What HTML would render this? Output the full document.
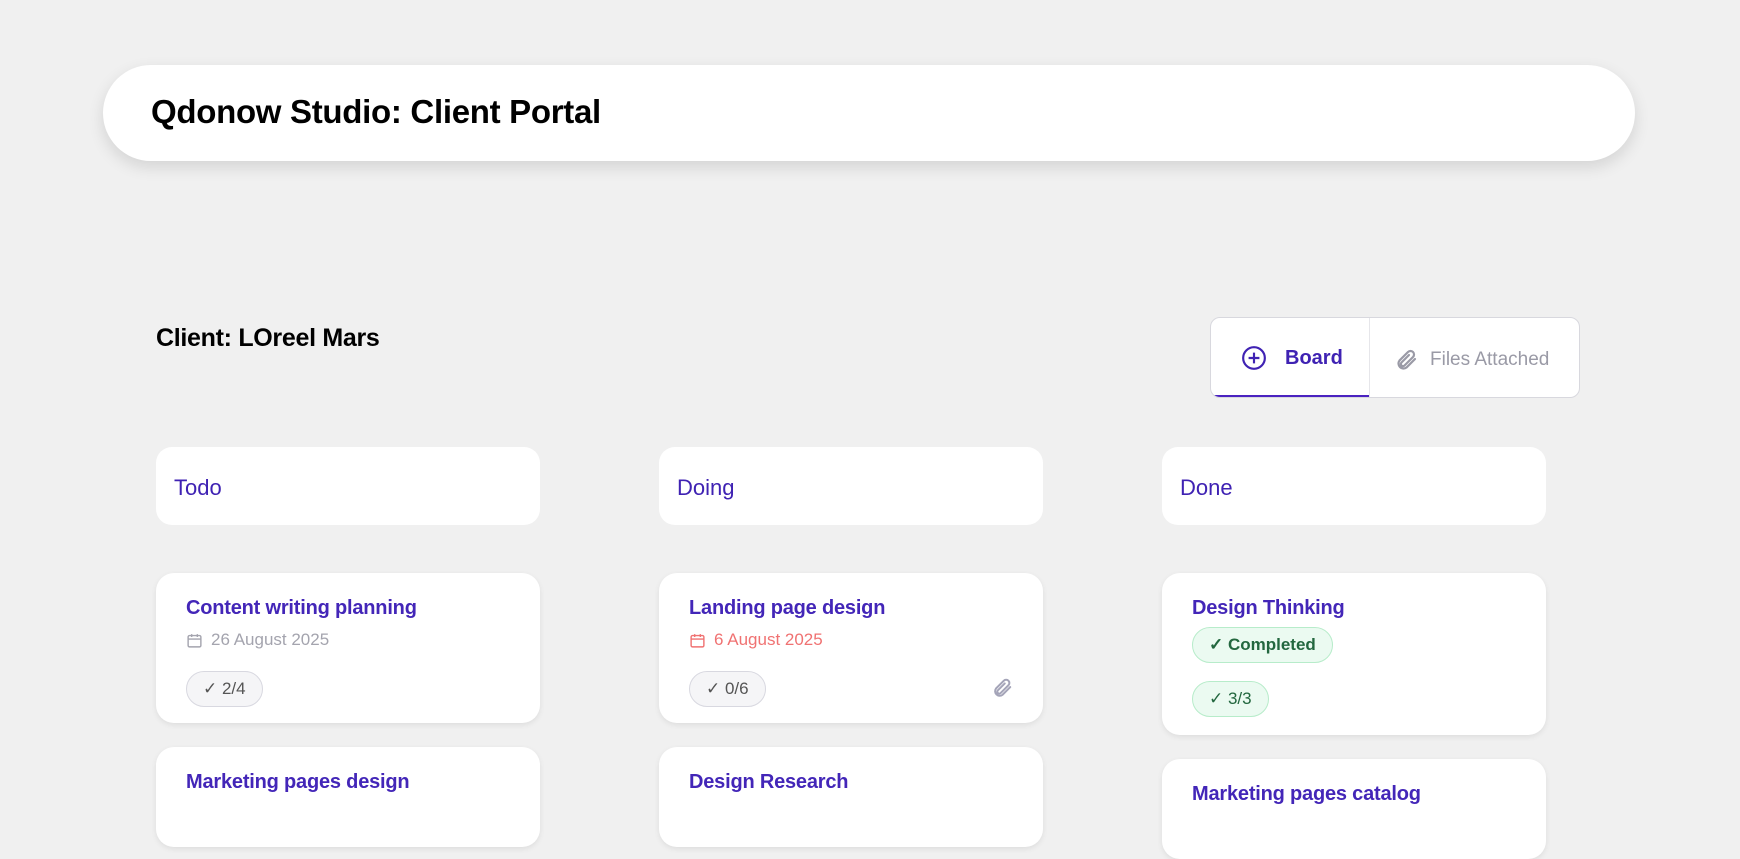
<!DOCTYPE html>
<html><head><meta charset="utf-8"><style>
*{box-sizing:border-box;margin:0;padding:0}
body{width:1740px;height:800px;background:#f0f0f0;font-family:"Liberation Sans",sans-serif;position:relative;overflow:hidden}
.abs{position:absolute}
.header{left:103px;top:65px;width:1532px;height:96px;background:#fff;border-radius:48px;box-shadow:0 6px 16px rgba(0,0,0,.12)}
.header h1{position:absolute;left:48px;top:28px;font-size:33px;font-weight:bold;color:#000;letter-spacing:-.3px}
.client{left:156px;top:324px;font-size:25px;color:#000;font-weight:bold;letter-spacing:-.3px}
.tabs{left:1210px;top:317px;width:370px;height:81px;background:#fff;border:1px solid #d8d8de;border-radius:10px;overflow:hidden}
.tab{position:absolute;top:0;height:80px;display:flex;align-items:center;font-size:20px}
.t1{left:0;width:158px;border-bottom:3px solid #4a22c0;color:#3f22b3;font-weight:bold;padding-left:30px;gap:18px;padding-top:3px}
.t2{left:158px;width:212px;border-left:1px solid #e6e6ea;color:#9a9aa6;padding-left:24px;gap:12px;font-size:19px;padding-top:3px}
.col{width:384px;height:78px;top:447px;background:#fff;border-radius:16px;font-size:22px;color:#3f22b3;padding:28px 0 0 18px}
.card{width:384px;background:#fff;border-radius:18px;box-shadow:0 2px 6px rgba(0,0,0,.08);padding:22px 30px}
.ttl{font-size:20px;color:#4326b8;font-weight:bold;line-height:26px;letter-spacing:-.2px}
.date{font-size:17px;color:#a4a4ae;margin-top:9px;display:flex;align-items:center;gap:8px}
.red{color:#f07272}
.pill{display:inline-flex;align-items:center;gap:6px;height:36px;padding:0 16px;border-radius:18px;border:1px solid #d8d8e0;background:#f5f5f7;color:#555;font-size:17px}
.green{background:#ebfaf1;border-color:#b7ecca;color:#23673f}
</style></head><body>
<div class="abs header"><h1>Qdonow Studio: Client Portal</h1></div>
<div class="abs client">Client: LOreel Mars</div>
<div class="abs tabs">
 <div class="tab t1"><svg width="26" height="26" viewBox="0 0 24 24" fill="none" stroke="#3f22b3" stroke-width="2"><circle cx="12" cy="12" r="10"/><path d="M12 7v10M7 12h10"/></svg>Board</div>
 <div class="tab t2"><svg width="24" height="24" viewBox="0 0 24 24" fill="none" stroke="#9a9aa6" stroke-width="2.2" stroke-linecap="round"><path d="M21 11l-8.5 8.5a5 5 0 01-7-7L14 4a3.5 3.5 0 015 5l-8.5 8.5a2 2 0 01-3-3L15 7"/></svg>Files Attached</div>
</div>
<div class="abs col" style="left:156px">Todo</div>
<div class="abs col" style="left:659px">Doing</div>
<div class="abs col" style="left:1162px">Done</div>

<div class="abs card" style="left:156px;top:573px;height:150px">
 <div class="ttl">Content writing planning</div>
 <div class="date"><svg width="17" height="17" viewBox="0 0 24 24" fill="none" stroke="#a4a4ae" stroke-width="2"><rect x="3" y="5" width="18" height="16" rx="2"/><path d="M3 10h18M8 3v4M16 3v4"/></svg>26 August 2025</div>
 <div class="pill" style="margin-top:21px">✓ 2/4</div>
</div>
<div class="abs card" style="left:156px;top:747px;height:100px"><div class="ttl">Marketing pages design</div></div>

<div class="abs card" style="left:659px;top:573px;height:150px">
 <div class="ttl">Landing page design</div>
 <div class="date red"><svg width="17" height="17" viewBox="0 0 24 24" fill="none" stroke="#f07272" stroke-width="2"><rect x="3" y="5" width="18" height="16" rx="2"/><path d="M3 10h18M8 3v4M16 3v4"/></svg>6 August 2025</div>
 <div class="pill" style="margin-top:21px">✓ 0/6</div>
 <svg class="abs" style="left:332px;top:104px" width="22" height="22" viewBox="0 0 24 24" fill="none" stroke="#a4a4b8" stroke-width="2.2" stroke-linecap="round"><path d="M21 11l-8.5 8.5a5 5 0 01-7-7L14 4a3.5 3.5 0 015 5l-8.5 8.5a2 2 0 01-3-3L15 7"/></svg>
</div>
<div class="abs card" style="left:659px;top:747px;height:100px"><div class="ttl">Design Research</div></div>

<div class="abs card" style="left:1162px;top:573px;height:162px">
 <div class="ttl">Design Thinking</div>
 <div class="pill green" style="margin-top:6px;font-weight:bold">✓ Completed</div><br>
 <div class="pill green" style="margin-top:18px">✓ 3/3</div>
</div>
<div class="abs card" style="left:1162px;top:759px;height:100px"><div class="ttl">Marketing pages catalog</div></div>
</body></html>
